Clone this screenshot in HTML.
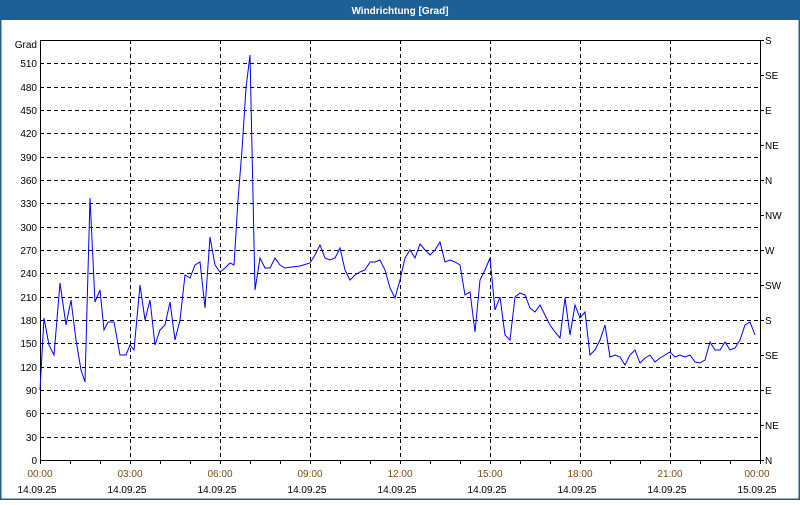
<!DOCTYPE html>
<html><head><meta charset="utf-8"><style>
html,body{margin:0;padding:0;background:#fff;}
body{width:800px;height:500px;overflow:hidden;font-family:"Liberation Sans",sans-serif;}
</style></head><body>
<svg width="800" height="500" viewBox="0 0 800 500" xmlns="http://www.w3.org/2000/svg" font-family="Liberation Sans, sans-serif" font-size="10">
<rect x="0" y="0" width="800" height="500" fill="#fff"/>
<rect x="0.5" y="0.5" width="799" height="499" fill="none" stroke="#1e5c94" stroke-width="2"/>
<rect x="0" y="0" width="800" height="20" fill="#1e5f96"/>
<text x="400" y="14" text-anchor="middle" fill="#fff" font-weight="bold" font-size="10">Windrichtung [Grad]</text>
<g stroke="#000" stroke-width="1" stroke-dasharray="4,3" fill="none">
<path d="M130.5 40V460M220.5 40V460M310.5 40V460M400.5 40V460M490.5 40V460M580.5 40V460M670.5 40V460"/>
<path d="M40 63.5H760M40 87.5H760M40 110.5H760M40 133.5H760M40 157.5H760M40 180.5H760M40 203.5H760M40 227.5H760M40 250.5H760M40 273.5H760M40 297.5H760M40 320.5H760M40 343.5H760M40 367.5H760M40 390.5H760M40 413.5H760M40 437.5H760"/>
</g>
<rect x="40.5" y="40.5" width="720" height="420" fill="none" stroke="#000"/>
<g stroke="#000">
<path d="M70.5 460v4M100.5 460v4M130.5 460v4M160.5 460v4M190.5 460v4M220.5 460v4M250.5 460v4M280.5 460v4M310.5 460v4M340.5 460v4M370.5 460v4M400.5 460v4M430.5 460v4M460.5 460v4M490.5 460v4M520.5 460v4M550.5 460v4M580.5 460v4M610.5 460v4M640.5 460v4M670.5 460v4M700.5 460v4M730.5 460v4M760.5 460v4M40.5 460v4"/>
<path d="M760 40.5h4M760 75.5h4M760 110.5h4M760 145.5h4M760 180.5h4M760 215.5h4M760 250.5h4M760 285.5h4M760 320.5h4M760 355.5h4M760 390.5h4M760 425.5h4M760 460.5h4"/>
</g>
<polyline fill="none" stroke="#0000ff" stroke-width="1" points="40,390 44,318 49,345 54,355 60,283 66,325 71,300 76,340 81,370 85,382 90,198 95,302 100,290 104,330 108,322 114,322 120,355 126,355 130,345 134,350 140,285 145,320 150,300 155,345 160,330 165,325 170,302 175,340 180,320 185,275 190,278 195,265 200,262 205,308 210,237 215,265 220,272 225,268 230,263 234,265 238,200 242,150 246,88 250,55 255,290 260,258 265,268 270,268 275,258 280,265 285,268 292,267 300,266 310,263 315,255 320,245 325,258 330,260 335,258 340,248 345,270 350,280 355,275 360,272 365,270 370,262 375,262 380,260 385,270 390,288 395,298 400,280 405,258 410,250 415,258 420,244 425,250 430,255 435,250 440,242 445,262 450,260 455,262 460,265 465,295 470,292 475,332 480,280 485,270 490,258 495,310 500,297 505,335 510,340 515,297 520,293 525,295 530,308 535,312 540,305 545,315 550,325 555,332 560,338 565,298 570,335 575,305 580,318 585,312 590,355 595,350 600,340 605,325 610,357 615,355 620,357 625,365 630,355 635,350 640,363 645,358 650,355 655,362 660,358 665,355 670,352 675,357 680,355 685,357 690,355 695,362 700,363 705,360 710,342 715,350 720,350 725,342 730,350 735,348 740,340 745,325 750,322 755,335"/>
<g text-anchor="end" fill="#000">
<text x="37" y="48">Grad</text>
<text x="37" y="67">510</text><text x="37" y="91">480</text><text x="37" y="114">450</text><text x="37" y="137">420</text><text x="37" y="161">390</text><text x="37" y="184">360</text><text x="37" y="207">330</text><text x="37" y="231">300</text><text x="37" y="254">270</text><text x="37" y="277">240</text><text x="37" y="301">210</text><text x="37" y="324">180</text><text x="37" y="347">150</text><text x="37" y="371">120</text><text x="37" y="394">90</text><text x="37" y="417">60</text><text x="37" y="441">30</text><text x="37" y="464">0</text>
</g>
<g fill="#000">
<text x="765" y="44">S</text><text x="765" y="79">SE</text><text x="765" y="114">E</text><text x="765" y="149">NE</text><text x="765" y="184">N</text><text x="765" y="219">NW</text><text x="765" y="254">W</text><text x="765" y="289">SW</text><text x="765" y="324">S</text><text x="765" y="359">SE</text><text x="765" y="394">E</text><text x="765" y="429">NE</text><text x="765" y="464">N</text>
</g>
<g text-anchor="middle" fill="#7a4a10">
<text x="40" y="477">00:00</text><text x="130" y="477">03:00</text><text x="220" y="477">06:00</text><text x="310" y="477">09:00</text><text x="400" y="477">12:00</text><text x="490" y="477">15:00</text><text x="580" y="477">18:00</text><text x="670" y="477">21:00</text><text x="757" y="477">00:00</text>
</g>
<g text-anchor="middle" fill="#000">
<text x="37" y="493">14.09.25</text><text x="127" y="493">14.09.25</text><text x="217" y="493">14.09.25</text><text x="307" y="493">14.09.25</text><text x="397" y="493">14.09.25</text><text x="487" y="493">14.09.25</text><text x="577" y="493">14.09.25</text><text x="667" y="493">14.09.25</text><text x="757" y="493">15.09.25</text>
</g>
</svg>
</body></html>
